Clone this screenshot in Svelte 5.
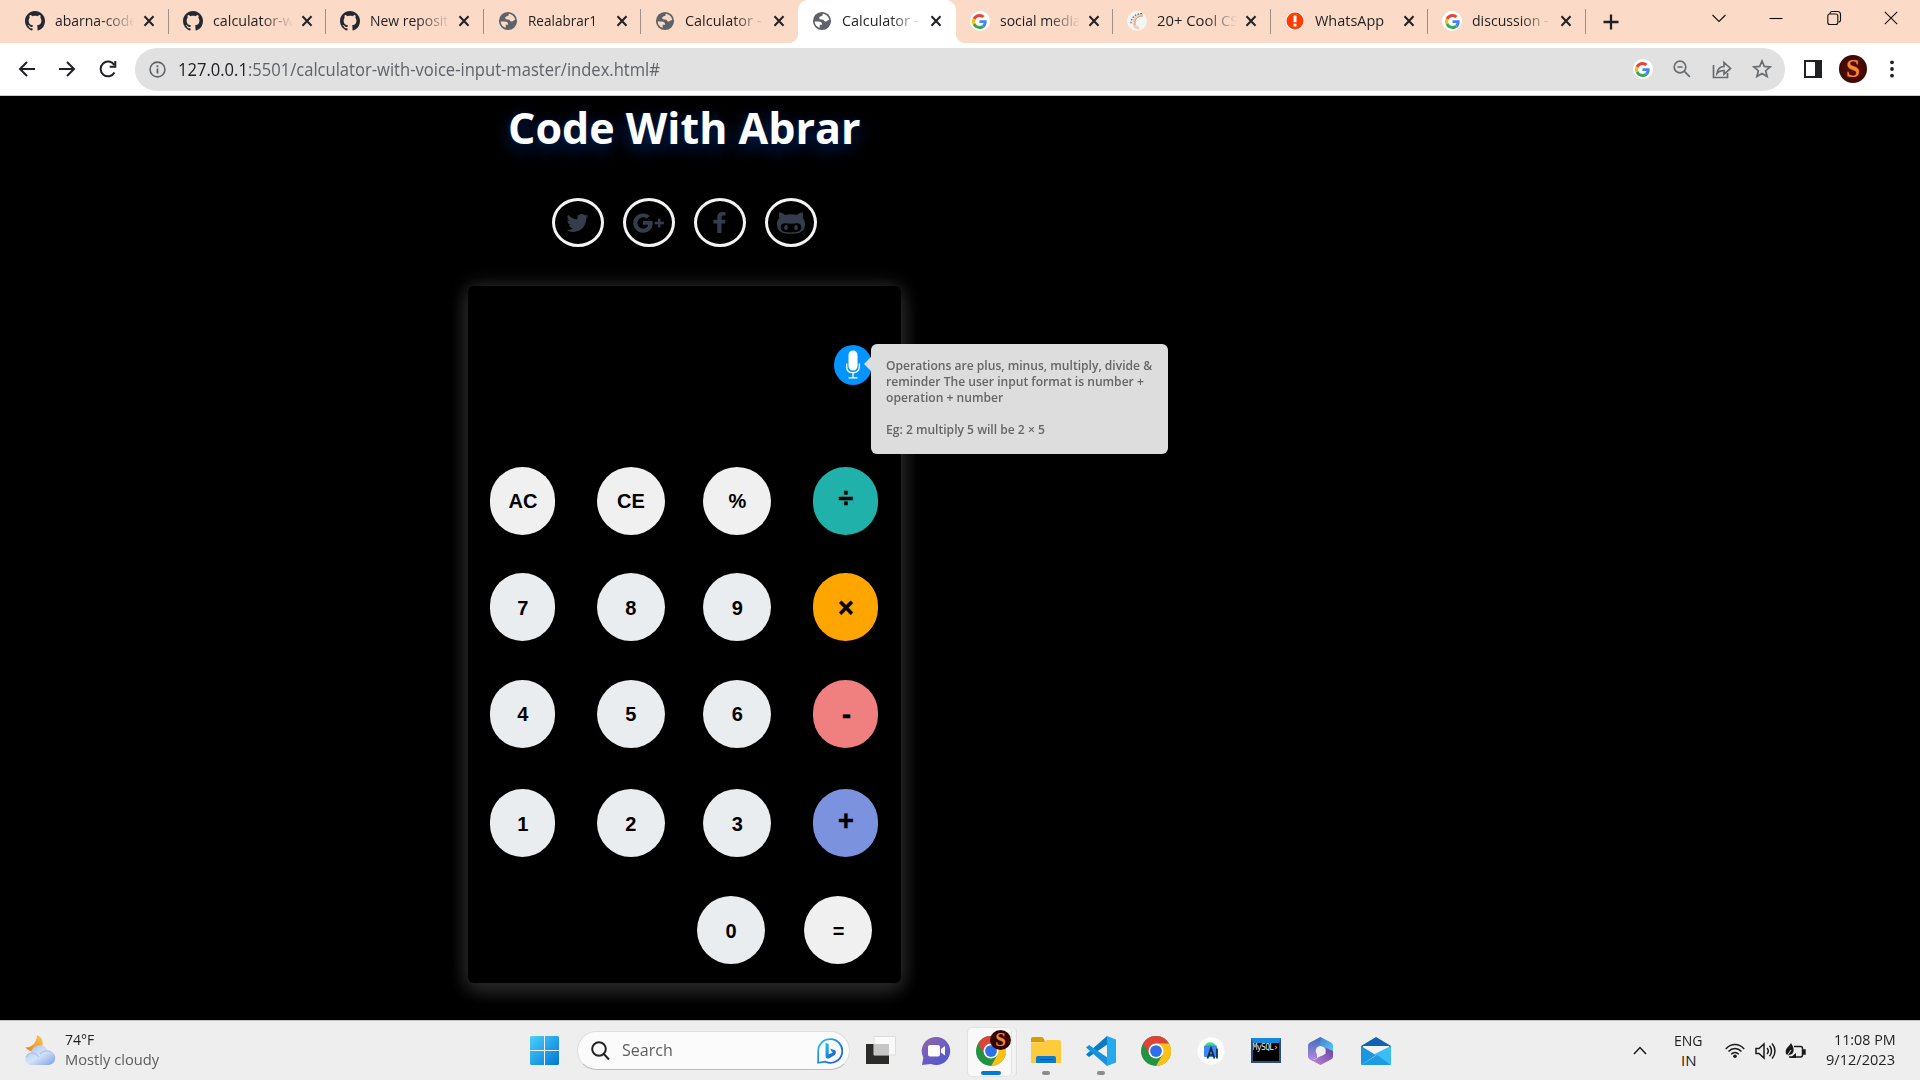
<script>
  const tabs = [
    { icon: 'github', label: 'abarna-code', w: 82, fade: true },
    { icon: 'github', label: 'calculator-w', w: 81, fade: true },
    { icon: 'github', label: 'New reposit', w: 78, fade: true },
    { icon: 'globe', label: 'Realabrar1', w: 69.5 },
    { icon: 'globe', label: 'Calculator -', w: 76, fade: true, bare: true },
    { icon: 'globe', label: 'Calculator -', w: 76, fade: true, active: true, bare: true },
    { icon: 'google', label: 'social media', w: 81, fade: true },
    { icon: 'hand', label: '20+ Cool CS', w: 81, fade: true },
    { icon: 'alert', label: 'WhatsApp', w: 69.5 },
    { icon: 'google', label: 'discussion -', w: 77, fade: true }
  ];
  const keys = [
    ['AC', 'fn'], ['CE', 'fn'], ['%', 'fn'], ['÷', 'op divide'],
    ['7', ''], ['8', ''], ['9', ''], ['×', 'op times'],
    ['4', ''], ['5', ''], ['6', ''], ['-', 'op minus'],
    ['1', ''], ['2', ''], ['3', ''], ['+', 'op plus']
  ];

  // Condenses or widens a text run to a given width in pixels.
  function fit(node, width) {
    const natural = node.offsetWidth;
    node.style.transform = `scaleX(${width / natural})`;
    node.style.marginRight = `${width - natural}px`;
  }
</script>

{#snippet google(size)}
  <svg width={size} height={size} viewBox="0 0 48 48">
    <path fill="#EA4335" d="M24 9.5c3.54 0 6.71 1.22 9.21 3.6l6.85-6.85C35.9 2.38 30.47 0 24 0 14.62 0 6.51 5.38 2.56 13.22l7.98 6.19C12.43 13.72 17.74 9.5 24 9.5z" />
    <path fill="#4285F4" d="M46.98 24.55c0-1.57-.15-3.09-.38-4.55H24v9.02h12.94c-.58 2.96-2.26 5.48-4.78 7.18l7.73 6c4.51-4.18 7.09-10.36 7.09-17.65z" />
    <path fill="#FBBC05" d="M10.53 28.59c-.48-1.45-.76-2.99-.76-4.59s.27-3.14.76-4.59l-7.98-6.19C.92 16.46 0 20.12 0 24c0 3.88.92 7.54 2.56 10.78l7.97-6.19z" />
    <path fill="#34A853" d="M24 48c6.48 0 11.93-2.13 15.89-5.81l-7.73-6c-2.15 1.45-4.92 2.3-8.16 2.3-6.26 0-11.57-4.22-13.47-9.91l-7.98 6.19C6.51 42.62 14.62 48 24 48z" />
  </svg>
{/snippet}

{#snippet chrome()}
  <svg width="30" height="30" viewBox="0 0 48 48">
    <circle cx="24" cy="24" r="24" fill="#229342" />
    <path fill="#db4437" d="M3.2 12A24 24 0 0 1 44.8 12L24 13 13.6 30z" />
    <path fill="#fbc116" d="M44.8 12A24 24 0 0 1 24 48L34.4 30 24 12z" />
    <circle cx="24" cy="24" r="12" fill="#fff" />
    <circle cx="24" cy="24" r="9.4" fill="#2d70e8" />
  </svg>
{/snippet}

{#snippet tabIcon(name)}
  {#if name === 'github'}
    <svg width="20" height="20" viewBox="0 0 16 16"><path fill="#24292f" d="M8 0C3.58 0 0 3.58 0 8c0 3.54 2.29 6.53 5.47 7.59.4.07.55-.17.55-.38 0-.19-.01-.82-.01-1.49-2.01.37-2.53-.49-2.69-.94-.09-.23-.48-.94-.82-1.13-.28-.15-.68-.52-.01-.53.63-.01 1.08.58 1.23.82.72 1.21 1.87.87 2.33.66.07-.52.28-.87.51-1.07-1.78-.2-3.64-.89-3.64-3.95 0-.87.31-1.59.82-2.15-.08-.2-.36-1.02.08-2.12 0 0 .67-.21 2.2.82.64-.18 1.32-.27 2-.27s1.36.09 2 .27c1.53-1.04 2.2-.82 2.2-.82.44 1.1.16 1.92.08 2.12.51.56.82 1.27.82 2.15 0 3.07-1.87 3.75-3.65 3.95.29.25.54.73.54 1.48 0 1.07-.01 1.93-.01 2.2 0 .21.15.46.55.38A8.01 8.01 0 0 0 16 8c0-4.42-3.58-8-8-8z" /></svg>
  {:else if name === 'globe'}
    <svg width="20" height="20" viewBox="1 1 22 22"><path fill="#5f6368" fill-rule="evenodd" d="M12 2a10 10 0 1 0 0 20 10 10 0 0 0 0-20zM4 12.500h4c2.800 0 4.200 1.300 4.200 3.600H9.500v3.400C6.300 18.600 4 16 4 12.500zM12.800 4c3.600.4 6.500 3 7.100 6.500l-2.100 1.300c-1 .9-2 1-3 .4l-1.300-1.700-3.500-.3c-1.400-.6-1.500-2.500 0-3.200l2.500-.8z" /></svg>
  {:else if name === 'google'}
    <span class="disc">{@render google(15)}</span>
  {:else if name === 'hand'}
    <svg width="20" height="20" viewBox="0 0 20 20" fill="none">
      <circle cx="10" cy="10" r="10" fill="#f3f5f4" />
      <path d="M16 4C10 4 7 7 7 11s2 6 5 6" stroke="#f4cdb8" stroke-width="3" />
      <path d="M15 2.500C8 2.500 3.500 7 4 14" stroke="#5a5a5a" stroke-width="1.200" stroke-dasharray="1.500 1.500" />
      <path d="M16 5C10 5 7.500 8 8 14" stroke="#c49579" stroke-width=".8" />
    </svg>
  {:else}
    <svg width="20" height="20" viewBox="0 0 20 20"><circle cx="10" cy="10" r="9.500" fill="#fff" /><circle cx="10" cy="10" r="8.500" fill="#ff3d00" /><path d="M8.500 4.500h3v6.800h-3zM8.500 12.700h3v2.800h-3z" fill="#fff" /></svg>
  {/if}
{/snippet}

<div class="screen">
  <header class="strip">
    {#each tabs as t}
      <div class="tab" class:active={t.active} class:bare={t.bare}>
        <span class="fav">{@render tabIcon(t.icon)}</span>
        <span class="label" class:fade={t.fade}><span class="run" use:fit={t.w}>{t.label}</span></span>
        <svg class="x" width="12" height="12" viewBox="0 0 12 12"><path d="M1.500 1.300l9 9.400M10.500 1.300l-9 9.400" /></svg>
      </div>
    {/each}
    <svg class="new" width="18" height="18" viewBox="0 0 18 18"><path d="M9 1.500v15M1.500 9h15" /></svg>
    <div class="window">
      <svg width="16" height="16" viewBox="0 0 16 16"><path d="M1.500 5L8 11.500 14.500 5" /></svg>
      <svg width="16" height="16" viewBox="0 0 16 16"><path d="M1.500 8.500h13" /></svg>
      <svg width="16" height="16" viewBox="0 0 16 16"><rect x="1.800" y="4" width="10" height="10.500" rx="2" /><path d="M4 4V3.500a2 2 0 0 1 2-2h5.500a3 3 0 0 1 3 3V10a2 2 0 0 1-2 2" /></svg>
      <svg width="16" height="16" viewBox="0 0 16 16"><path d="M1.800 1.800l12.400 12.400M14.200 1.800L1.800 14.200" /></svg>
    </div>
  </header>

  <nav class="toolbar">
    <svg class="nav" width="18" height="18" viewBox="0 0 18 18"><path d="M17 9H2M9 2L2 9l7 7" /></svg>
    <svg class="nav" width="18" height="18" viewBox="0 0 18 18"><path d="M1 9h15M9 2l7 7-7 7" /></svg>
    <svg class="nav" width="20" height="20" viewBox="0 0 20 20"><path d="M16.500 13.500A7.400 7.400 0 1 1 16.300 6M17.300 2v5.700h-5.600" /></svg>
    <div class="address">
      <svg width="17" height="17" viewBox="0 0 17 17"><circle cx="8.500" cy="8.500" r="7.400" fill="none" stroke="#5f6368" stroke-width="1.600" /><path d="M7.600 7.500h1.800v5H7.600zM7.600 4.300h1.800v1.900H7.600z" fill="#5f6368" /></svg>
      <span class="url"><span class="run" use:fit={482}><b>127.0.0.1</b>:5501/calculator-with-voice-input-master/index.html#</span></span>
      <div class="tools">
        <span class="disc">{@render google(15)}</span>
        <svg width="18" height="18" viewBox="0 0 18 18"><circle cx="7" cy="7" r="5.800" /><path d="M11.200 11.200l5.600 5.600M4.400 7h5.200" /></svg>
        <svg width="20" height="20" viewBox="0 0 20 20"><path d="M1.500 6v12.500h14V14M5 14.500c.5-4.500 3-6.800 7-7V3.500l6.500 6L12 15.200v-3.700c-3 0-5.300.8-7 3z" /></svg>
        <svg width="20" height="20" viewBox="0 0 20 20"><path d="M10 2l2.300 5.400 5.900.5-4.500 3.800 1.400 5.800L10 14.400l-5.100 3.100 1.400-5.800L1.800 7.900l5.900-.5z" /></svg>
      </div>
    </div>
    <span class="panel"></span>
    <span class="avatar">S</span>
    <svg class="dots" width="6" height="18" viewBox="0 0 6 18"><circle cx="3" cy="2.300" r="1.900" /><circle cx="3" cy="9" r="1.900" /><circle cx="3" cy="15.700" r="1.900" /></svg>
  </nav>

  <main>
    <div class="column">
      <h1><span class="run" use:fit={353}>Code With Abrar</span></h1>
      <div class="social">
        <a href="#twitter" aria-label="Twitter"><svg width="22" height="18" viewBox="2 4 21 17" preserveAspectRatio="none"><path d="M22.460 6c-.77.350-1.600.580-2.460.690.880-.530 1.560-1.370 1.880-2.380-.830.500-1.750.850-2.720 1.050C18.370 4.500 17.260 4 16 4c-2.350 0-4.270 1.920-4.270 4.290 0 .340.040.670.110.980C8.280 9.090 5.110 7.380 3 4.790c-.370.630-.580 1.370-.580 2.150 0 1.490.750 2.810 1.910 3.560-.710 0-1.370-.2-1.950-.5v.030c0 2.080 1.480 3.820 3.440 4.210a4.220 4.220 0 0 1-1.930.070 4.280 4.280 0 0 0 4 2.980 8.521 8.521 0 0 1-5.330 1.840c-.340 0-.680-.020-1.020-.060C3.440 20.290 5.700 21 8.120 21 16 21 20.330 14.460 20.330 8.790c0-.190 0-.370-.010-.560.840-.600 1.560-1.360 2.140-2.230z" /></svg></a>
        <a href="#google" aria-label="Google Plus"><svg width="31" height="20" viewBox="0 0 31 20"><path d="M10 8v3.700h5.200c-.5 2.500-2.500 4.100-5.200 4.100a5.700 5.700 0 1 1 3.700-10.100l2.800-2.800A9.700 9.700 0 1 0 10 19.800c5.800 0 9.700-4 9.700-9.700 0-.8-.1-1.400-.2-2.100zM25 5.400h2.400v3.400h3.400v2.400h-3.400v3.400H25v-3.400h-3.400V8.800H25z" /></svg></a>
        <a href="#facebook" aria-label="Facebook"><svg width="13" height="21" viewBox="0 0 13 21"><path d="M12.500.2v3.400h-2c-1.500 0-2 .7-2 1.900v2.200h4l-.5 3.700H8.500V21H4.300V11.400H.5V7.700h3.800V5C4.300 1.800 6.300 0 9.300 0c1.400 0 2.700.1 3.200.2z" /></svg></a>
        <a href="#github" aria-label="GitHub"><svg width="28" height="22" viewBox="0 0 28 22"><path fill-rule="evenodd" d="M2.600.2C4.500.3 6.500 1.600 8 2.900c3.500-.8 8.500-.8 12 0C21.500 1.600 23.500.3 25.400.2c.8 2.200.9 4 .3 5.800C27.200 7.500 28 9.400 28 11.700c0 7.500-4.600 10.100-14 10.100S0 19.200 0 11.700C0 9.400.8 7.500 2.300 6c-.6-1.800-.5-3.600.3-5.800zM8 11.300c-2.700 0-4.300 1.500-4.300 4 0 4.200 3.600 5.100 10.300 5.100s10.300-.9 10.300-5.100c0-2.500-1.600-4-4.300-4-2 0-4 .5-6 .5s-4-.5-6-.5z" /><ellipse cx="9" cy="15.500" rx="1.800" ry="2.500" /><ellipse cx="19" cy="15.500" rx="1.800" ry="2.500" /></svg></a>
      </div>

      <section class="calc">
        <div class="display">
          <div class="mic">
            <svg width="16" height="30" viewBox="0 0 16 30"><rect x="3.500" y=".5" width="9" height="20" rx="4.500" fill="#fff" /><path d="M1.700 13.500v3.200c0 4 2.700 6 6.300 6s6.300-2 6.300-6v-3.200M8 23v4.500M3.500 27.800h9" fill="none" stroke="#fff" stroke-width="1.300" /></svg>
            <div class="tip">
              <p><span class="run" use:fit={266}>Operations are plus, minus, multiply, divide &amp;</span></p>
              <p><span class="run" use:fit={258}>reminder The user input format is number +</span></p>
              <p><span class="run" use:fit={117}>operation + number</span></p>
              <p class="eg"><span class="run" use:fit={159}>Eg: 2 multiply 5 will be 2 × 5</span></p>
            </div>
          </div>
        </div>
        <div class="keys">
          {#each keys as [label, kind]}
            <button class="key {kind}"><span>{label}</span></button>
          {/each}
        </div>
        <div class="last">
          <button class="key"><span>0</span></button>
          <button class="key fn"><span>=</span></button>
        </div>
      </section>
    </div>
  </main>

  <footer>
    <div class="weather">
      <svg width="31" height="31" viewBox="0 0 31 31">
        <defs>
          <linearGradient id="moon" x1="1" y1="0" x2="0" y2="1"><stop offset="0" stop-color="#f6c95a" /><stop offset="1" stop-color="#ef7d14" /></linearGradient>
          <linearGradient id="cloud" x1="0" y1="0" x2="1" y2="1"><stop offset="0" stop-color="#9dbdf0" /><stop offset=".5" stop-color="#d5e3f8" /><stop offset="1" stop-color="#7d9fe0" /></linearGradient>
        </defs>
        <path d="M12 0c5 2 7 7 5 12S7 19 0 12.500C6 13 12 8 12 0z" fill="url(#moon)" />
        <path d="M6 30C-2 29-1 18.500 6 18c1-9 14-11 17-2 9-1 10 13 1 14z" fill="url(#cloud)" />
        <path d="M1 22c4-6 9-5 13 0M15 19c4-4 7-4 11-2" fill="none" stroke="#a8c3f0" stroke-width="1.200" />
      </svg>
      <div class="lines">
        <span><span class="run" use:fit={29}>74°F</span></span>
        <span class="muted"><span class="run" use:fit={94}>Mostly cloudy</span></span>
      </div>
    </div>

    <div class="apps">
      <svg class="start" width="29" height="29" viewBox="0 0 29 29">
        <defs><linearGradient id="win" x1="0" y1="0" x2="1" y2="1" gradientUnits="objectBoundingBox"><stop offset="0" stop-color="#4bd0fb" /><stop offset="1" stop-color="#0078d4" /></linearGradient></defs>
        <path fill="url(#win)" d="M1 0h13v14H0V1zM15 0h13l1 1v13H15zM0 15h14v14H1l-1-1zM15 15h14v13l-1 1H15z" />
      </svg>
      <div class="search">
        <svg width="19" height="20" viewBox="0 0 19 20"><circle cx="8" cy="8" r="6.800" /><path d="M12.800 13l5.200 5.500" /></svg>
        <span class="query"><span class="run" use:fit={51}>Search</span></span>
        <svg class="bing" width="26" height="26" viewBox="0 0 26 26">
          <defs><linearGradient id="bing" x1="0" y1="0" x2="1" y2="1"><stop offset="0" stop-color="#23c3f3" /><stop offset="1" stop-color="#1a4fd0" /></linearGradient></defs>
          <path d="M13 1.200a11.800 11.800 0 1 1-4.500 22.500L1.200 24.800V13A11.800 11.800 0 0 1 13 1.200z" fill="none" stroke="url(#bing)" stroke-width="1.800" />
          <path d="M8.500 4.800l3.200 1.300v10.300l4.200-2.200-1.600-1-.9-2.700 5 1.900c1.200 2.400 0 4.300-1.900 5.300l-4.600 2.700c-2 .4-3.200-.6-3.400-2z" fill="url(#bing)" />
        </svg>
      </div>
      <div class="row">
        <span class="app"><svg width="30" height="29" viewBox="0 0 30 29"><path d="M0 8h23v20H0z" fill="#2b2b29" /><path d="M8 .5h21.500V19H8z" fill="#fafafa" stroke="#dcdcdc" /><path d="M8 8h15v11H8z" fill="#c6c6c6" /></svg></span>
        <span class="app"><svg width="30" height="30" viewBox="0 0 30 30"><defs><linearGradient id="chat" x1="0" y1="0" x2=".7" y2="1"><stop offset="0" stop-color="#9067a9" /><stop offset="1" stop-color="#5557cf" /></linearGradient></defs><path d="M15 1a14 14 0 1 1-5 27L1 29l1.300-7.400A14 14 0 0 1 15 1z" fill="url(#chat)" /><rect x="7" y="9" width="12" height="11.500" rx="2" fill="#fff" /><path d="M20 13l4-3v9.500l-4-3z" fill="#fff" /></svg></span>
        <span class="app current">{@render chrome()}<span class="badge">S</span><i class="line wide"></i></span>
        <span class="app"><svg width="30" height="27" viewBox="0 0 30 27"><path d="M0 2Q0 0 2 0h8q2 0 3 2l1 3H0z" fill="#d99a00" /><path d="M0 5.500l13-.2L16 3h12q2 0 2 2v21H0z" fill="#ffcb3c" /><path d="M5 26v-5q0-2 2-2h16q2 0 2 2v5z" fill="#0c7bd0" /><path d="M9 22.500h13" stroke="#07559c" /></svg><i class="line"></i></span>
        <span class="app"><svg width="30" height="30" viewBox="0 0 30 30"><path d="M21 0L0 18.500 3 21 22 8z" fill="#0b7bc4" /><path d="M21 30L0 11.500 3 9l19 13z" fill="#1593df" /><path d="M21 0l9 3.500v23L21 30z" fill="#27a9f0" /></svg><i class="line"></i></span>
        <span class="app">{@render chrome()}</span>
        <span class="app"><svg width="28" height="28" viewBox="0 0 28 28"><circle cx="14" cy="14" r="13.500" fill="#fff" /><path d="M8 9c1-5 9-5 11 0z" fill="#3ddc84" /><rect x="7" y="8.500" width="13" height="11.500" rx="1" fill="#4285f4" /><path d="M10.500 21.500L14 11l3.500 10.500M12 18h4M20 11.500v10" stroke="#0b2c46" stroke-width="1.700" fill="none" /></svg></span>
        <span class="app"><span class="mysql"><b>MySQL›</b></span></span>
        <span class="app"><svg width="27" height="28" viewBox="0 0 27 28"><defs><linearGradient id="m1" x1="0" y1="0" x2="1" y2="1"><stop offset="0" stop-color="#3d6fc4" /><stop offset="1" stop-color="#5ad2fa" /></linearGradient><linearGradient id="m2" x1="0" y1="0" x2="0" y2="1"><stop offset="0" stop-color="#3f6cba" /><stop offset="1" stop-color="#b28ae2" /></linearGradient><linearGradient id="m3" x1="0" y1="1" x2="1" y2="0"><stop offset="0" stop-color="#c387e0" /><stop offset="1" stop-color="#66439c" /></linearGradient></defs><path d="M13.500 0L24 5.500q2 1 2 3v8l-8-5-4.500-2.500L8 12V4z" fill="url(#m1)" /><path d="M13.500 0L3 5.500q-2 1-2 3v11q0 2 2 3l2 1 5-2.500V8.500L13 7z" fill="url(#m2)" /><path d="M26 14v5.500q0 2-2 3L13.500 28 3 22.500q5 1.500 8-2l7.500-3.800v-6z" fill="url(#m3)" /><circle cx="13.500" cy="14" r="4.800" fill="#eee" /></svg></span>
        <span class="app"><svg width="30" height="28" viewBox="0 0 30 28"><path d="M0 9L15 0l15 9v4H0z" fill="#0f63b0" /><path d="M2 9h26v8l-13 4L2 17z" fill="#f3f3f3" /><path d="M0 9l15 9.200L0 28z" fill="#1c96dc" /><path d="M30 9v19L13 17.200z" fill="#38bdf4" /><path d="M0 28l16-10 14 10z" fill="#1c9be2" /></svg></span>
      </div>
    </div>

    <div class="tray">
      <svg class="up" width="14" height="9" viewBox="0 0 14 9"><path d="M1 8l6-6.500L13 8" /></svg>
      <div class="lines lang"><span><span class="run" use:fit={29}>ENG</span></span><span><span class="run" use:fit={15}>IN</span></span></div>
      <svg class="wifi" width="20" height="16" viewBox="0 0 20 16"><path d="M.8 6C6 .1 14 .1 19.200 6M3.500 8.600c3.800-4 9.200-4 13 0M6.200 11.200c2.300-2.300 5.300-2.300 7.600 0" /><circle cx="10" cy="13.300" r="1.800" fill="#1b1b1b" stroke="none" /></svg>
      <svg class="sound" width="21" height="18" viewBox="0 0 21 18"><path d="M1 6.500h3L9 2v14l-5-4.500H1zM12 6c1.600 1.800 1.600 4.200 0 6M14.500 3.800c2.700 3 2.700 7.400 0 10.400M17 1.500c4 4.400 4 10.600 0 15" /></svg>
      <svg class="power" width="21" height="18" viewBox="0 0 21 18"><path d="M9 4.500h6.500q2 0 2 2V13q0 2-2 2H4M18.500 8v4h1.500V8z" /><path d="M1 12C-.5 6 4 5 6 1c2.500 4 4 8 1 11L3 13.500zM5 16l6-5v5z" fill="#1b1b1b" stroke="none" /><path d="M2 14l4-6" stroke="#eee" stroke-width="1" /></svg>
      <div class="lines clock"><span><span class="run" use:fit={62}>11:08 PM</span></span><span><span class="run" use:fit={69}>9/12/2023</span></span></div>
    </div>
  </footer>
</div>

<style>
  :global(body) { margin: 0; background: #000; overflow: hidden; }
  .screen { width: 1920px; height: 1080px; display: flex; flex-direction: column; font-family: "Open Sans", "Noto Sans", sans-serif; color: #1f1f1f; box-sizing: border-box; }
  .screen :global(*) { box-sizing: border-box; }
  svg { display: block; flex: none; }
  .run { display: inline-block; white-space: nowrap; transform-origin: left center; }

  .strip { height: 43px; background: #fcdac8; display: flex; padding-left: 11.200px; align-items: center; flex: none; }
  .tab { position: relative; width: 157.450px; height: 43px; display: flex; align-items: center; padding: 0 0 1px 13px; flex: none; }
  .tab::after { content: ""; position: absolute; right: 0; top: 9px; width: 1px; height: 25px; background: #a28d84; }
  .tab.bare::after { display: none; }
  .tab.active { background: #fff; border-radius: 10px 10px 0 0; }
  .tab.active::before { content: ""; position: absolute; left: -10px; right: -10px; bottom: 0; height: 10px; background: radial-gradient(circle at 0 0, transparent 10px, #fff 10.500px) left / 10px 10px no-repeat, radial-gradient(circle at 100% 0, transparent 10px, #fff 10.500px) right / 10px 10px no-repeat; }
  .fav { width: 22px; display: flex; justify-content: center; }
  .label { width: 79px; margin-left: 9px; overflow: hidden; font-size: 15px; line-height: 22px; height: 22px; margin-top: -2px; white-space: nowrap; }
  .label.fade { mask-image: linear-gradient(to right, #000 48px, transparent 80px); }
  .x { margin-left: 9px; fill: none; stroke: #202124; stroke-width: 2; }
  .new { margin-left: 16.500px; fill: none; stroke: #202124; stroke-width: 2.300; }
  .window { margin-left: auto; margin-right: 21px; display: flex; gap: 41.300px; padding-bottom: 7px; }
  .window svg { fill: none; stroke: #111; stroke-width: 1.100; }
  .disc { width: 20px; height: 20px; border-radius: 50%; background: #fff; display: flex; align-items: center; justify-content: center; flex: none; }

  .toolbar { height: 53px; background: #fff; border-bottom: 1px solid #c9cccb; display: flex; align-items: center; padding: 0 0 0 18px; flex: none; }
  .nav { fill: none; stroke: #202124; stroke-width: 2; margin-right: 22px; }
  .nav + .nav + .nav { margin-right: 17px; }
  .address { width: 1650px; height: 43px; border-radius: 22px; background: #e1e1e1; display: flex; align-items: center; padding: 0 13px 0 14px; }
  .url { margin-left: 12px; font-size: 17.500px; color: #5f6368; line-height: 24px; height: 24px; }
  .url b { font-weight: 400; color: #202124; }
  .tools { margin-left: auto; display: flex; gap: 20.500px; align-items: center; }
  .tools > svg { fill: none; stroke: #6a6d70; stroke-width: 1.700; }
  .panel { margin-left: 19px; width: 18px; height: 18px; border: 2.500px solid #202124; border-right-width: 7px; flex: none; }
  .avatar { margin-left: 17px; width: 28px; height: 28px; border-radius: 50%; background: radial-gradient(#641005, #2a0502); color: #f28a35; font: bold 25px/28px "Liberation Serif", serif; text-align: center; }
  .dots { margin-left: 22px; fill: #202124; }

  main { height: 924px; background: #000; flex: none; padding-left: 468px; }
  .column { width: 432.500px; height: 924px; display: flex; flex-direction: column; align-items: center; }
  h1 { margin: 0; height: 64px; font-size: 43px; line-height: 64px; color: #fff; text-shadow: 0 0 3px #001a38, 0 5px 17px rgba(0, 60, 170, .65); }
  .social { margin-top: 38px; display: flex; gap: 19px; }
  .social a { width: 52px; height: 49px; border: 3.500px solid #f3f3f3; border-radius: 50%; display: flex; align-items: center; justify-content: center; }
  .social svg { fill: #353d4c; }
  .calc { margin-top: 39px; width: 432.500px; height: 697px; border-radius: 6px; background: #000; box-shadow: 0 0 20px #2a2a2a, 0 8px 20px #2a2a2a; display: flex; flex-direction: column; flex: none; }
  .display { height: 180.500px; padding: 59px 29px 0 0; display: flex; justify-content: flex-end; }
  .mic { position: relative; width: 38px; height: 40px; border-radius: 50%; background: #0494ff; display: flex; align-items: center; justify-content: center; }
  .tip { position: absolute; left: 37px; top: -1px; width: 297px; height: 110px; background: #ddd; border-radius: 6px; padding: 13.500px 15px; color: #666; font-size: 12px; font-weight: 600; }
  .tip::before { content: ""; position: absolute; left: -7px; top: 13px; border: 7px solid transparent; border-left-width: 0; border-right-color: #ddd; }
  .tip p { margin: 0; height: 16px; line-height: 16px; }
  .tip .eg { margin-top: 16px; }
  .keys { display: grid; grid-template-columns: 106.500px 106.500px 110px 65px; grid-template-rows: 106.500px 106.500px 109.500px 107px; padding-left: 22.400px; }
  .last { display: flex; gap: 38.500px; padding-left: 229px; }
  .key { width: 68px; height: 68px; border: 0; border-radius: 34px; padding: 0; background: #e9edf0; color: #000; font: bold 20px/22px "Liberation Sans", Arial, sans-serif; display: flex; align-items: center; justify-content: center; }
  .key span { padding-top: 1px; }
  .key:nth-child(4n + 1) { width: 65px; }
  .last .key { width: 68px; }
  .key.fn { background: #f0f0f0; }
  .last .fn span { padding-left: 2px; }
  .key.op { width: 65px; font-size: 27px; -webkit-text-stroke: .5px #000; }
  .divide { background: #20b2aa; }
  .times { background: #ffa500; }
  .minus { background: #f08080; }
  .plus { background: #7b92df; }
  .divide span, .plus span { padding: 0 0 5px; }
  .times span { padding: 1px 0 0; }
  .minus span { padding: 3px 0 0 1px; }

  footer { height: 60px; background: #eee; border-top: 1px solid #c4c2c1; display: flex; flex: none; align-items: center; font-size: 15px; }
  .weather { width: 530px; flex: none; padding-left: 25px; display: flex; align-items: center; gap: 8.500px; }
  .lines { display: flex; flex-direction: column; padding-bottom: 4px; }
  .lines > span { height: 20px; line-height: 20px; }
  .muted { color: #5c5c5c; }
  .apps { display: flex; align-items: center; flex: none; }
  .search { margin-left: 18px; width: 273px; height: 39px; border: 1px solid #dedede; border-bottom-color: #bcbcbc; border-radius: 20px; background: #fbfbfb; display: flex; align-items: center; padding: 0 6px 0 13px; }
  .search svg:first-child { fill: none; stroke: #222; stroke-width: 2; }
  .query { margin-left: 12px; font-size: 17px; line-height: 24px; height: 25px; color: #5e5e5e; }
  .bing { margin-left: auto; }
  .row { display: flex; margin-left: 3px; }
  .app { position: relative; width: 55px; height: 48px; display: flex; align-items: center; justify-content: center; flex: none; }
  .current::before { content: ""; position: absolute; left: 3.500px; top: 0; width: 43px; height: 48px; background: #f9f9f9; border: 1px solid #e2e2e2; border-radius: 5px; box-shadow: 4px 0 0 #f3f3f3, 5px 0 0 #e0e0e0; }
  .current :global(svg) { position: relative; }
  .badge { position: absolute; left: 27px; top: 3px; width: 21px; height: 20px; border-radius: 50%; background: #350503; color: #f28a35; font: bold 19px/20px "Liberation Serif", serif; text-align: center; }
  .line { position: absolute; left: 23.500px; bottom: 0; width: 8px; height: 4px; border-radius: 2px; background: #8b8b8b; }
  .line.wide { left: 17.500px; width: 20px; background: #0078d4; }
  .mysql { width: 30px; height: 25px; border: 2px solid #2d4d7d; border-top: 5px solid #1687df; background: #000; color: #eee; }
  .mysql b { display: block; width: 26px; overflow: hidden; font: 8px/9px "DejaVu Sans Mono", monospace; letter-spacing: -.6px; }
  .tray { flex: 1; display: flex; align-items: center; justify-content: flex-end; padding-right: 24.500px; }
  .tray svg { fill: none; stroke: #1b1b1b; stroke-width: 1.500; }
  .lang { margin-left: 27px; align-items: center; padding-bottom: 2px; }
  .wifi { margin-left: 22.500px; }
  .sound { margin-left: 10px; }
  .power { margin-left: 9px; }
  .clock { margin-left: 20px; align-items: flex-end; }
</style>
